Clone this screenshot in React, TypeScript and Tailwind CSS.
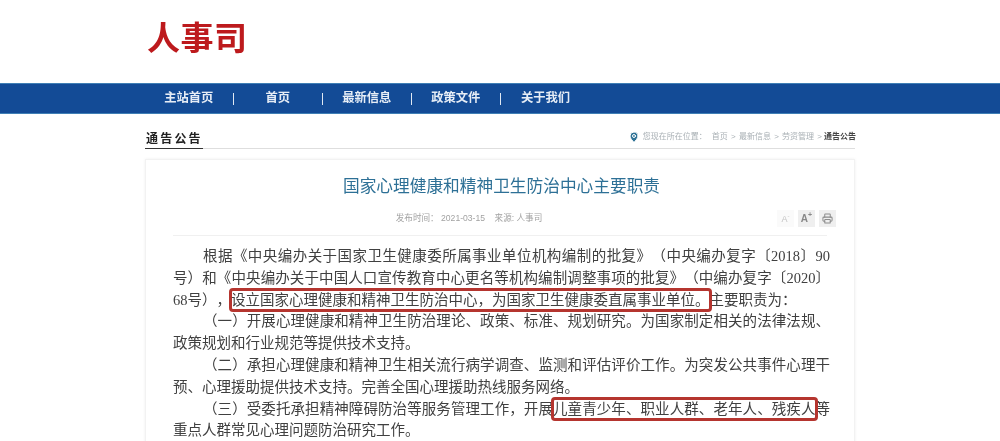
import { MapPin, Printer } from "lucide-react"

const sans = "font-['Liberation_Sans','Noto_Sans_CJK_SC',sans-serif]"
const navItems = ["主站首页", "首页", "最新信息", "政策文件", "关于我们"]

function Line({ indent, last, children }: { indent?: boolean; last?: boolean; children: React.ReactNode }) {
  return (
    <div className={`h-[21.8px] whitespace-nowrap ${indent ? "pl-[30px]" : ""} ${last ? "" : "[text-align-last:justify]"}`}>
      {children}
    </div>
  )
}

function Mark({ children }: { children: React.ReactNode }) {
  return <span className="rounded-[2px] py-[2px] outline-[3px] -outline-offset-1 outline-[#b5352f]">{children}</span>
}

export default function App() {
  return (
    <div className={`h-[441px] w-[1000px] overflow-hidden bg-white blur-[0.35px] ${sans}`}>
      <header className="h-[83px] pl-[147px] pt-[18px]">
        <h1 className="text-[33px] leading-[42px] font-bold tracking-[0.5px] text-[#bd1a1d]">人事司</h1>
      </header>

      <nav className="flex h-[31px] items-center border-y border-[#3f7fb5] bg-[#134b96] pl-[145px]">
        {navItems.map((item, i) => (
          <div key={item} className="flex w-[89px] items-center">
            <span className="flex-1 text-center text-[12.3px] font-bold text-[#e6edf6]">{item}</span>
            {i < navItems.length - 1 && <span className="h-[12px] w-[1.5px] bg-[#dfe8f3]" />}
          </div>
        ))}
      </nav>

      <div className="mx-[145px] mt-[14px] flex h-[21px] items-start justify-between border-b border-[#dedede]">
        <div className="h-[21px] border-b border-[#333] pl-px text-[12px] leading-[23px] font-bold tracking-[2.2px] text-[#222]">
          通告公告
        </div>
        <div className="-mr-px flex items-center pt-[2px] text-[8px] leading-[14px] text-[#a9b0b5]">
          <MapPin size={12} className="mr-[3px] fill-[#2f7396] text-white" strokeWidth={2} />
          <span className="mr-[5px]">您现在所在位置：</span>
          <span className="[word-spacing:1px]">首页 &gt; 最新信息 &gt; 劳资管理 &gt; </span>
          <span className="ml-[2px] font-bold text-[#444]">通告公告</span>
        </div>
      </div>

      <main className="mx-[145px] mt-[10px] h-[300px] border border-[#f2f2f2] px-[27px] shadow-[0_0_3px_#f0f0f0]">
        <h2 className="mt-[15px] pl-[3px] text-center text-[16.7px] leading-[24px] text-[#2d7096]">国家心理健康和精神卫生防治中心主要职责</h2>

        <div className="relative mt-[13px] flex h-[24px] justify-center border-b border-[#f0f0f0] pr-[62px] text-[8.6px] leading-[12px] text-[#a2a2a2]">
          <span>发布时间： 2021-03-15&nbsp;&nbsp;&nbsp;&nbsp;来源: 人事司</span>
          <div className="absolute top-[-2px] right-[-9px] flex gap-[4px]">
            <span className="flex h-[17px] w-[17px] items-center justify-center bg-[#fafafa] text-[9px] text-[#c4c4c4]">A<sup className="text-[6px]">-</sup></span>
            <span className="flex h-[17px] w-[17px] items-center justify-center bg-[#efefef] text-[10px] font-bold text-[#888]">A<sup className="text-[7px]">+</sup></span>
            <span className="flex h-[17px] w-[17px] items-center justify-center bg-[#efefef] text-[#8c8c8c]"><Printer size={11} strokeWidth={2.2} /></span>
          </div>
        </div>

        <article className="mt-[10px] -mr-[3px] font-['Liberation_Serif','Noto_Sans_CJK_SC',serif] text-[14.5px] leading-[21.8px] text-[#404040] [text-spacing-trim:space-all]">
          <Line indent>根据《中央编办关于国家卫生健康委所属事业单位机构编制的批复》（中央编办复字〔2018〕90</Line>
          <Line>号）和《中央编办关于中国人口宣传教育中心更名等机构编制调整事项的批复》（中编办复字〔2020〕</Line>
          <Line last>68号），<Mark>设立国家心理健康和精神卫生防治中心，为国家卫生健康委直属事业单位。</Mark>主要职责为：</Line>
          <Line indent>（一）开展心理健康和精神卫生防治理论、政策、标准、规划研究。为国家制定相关的法律法规、</Line>
          <Line last>政策规划和行业规范等提供技术支持。</Line>
          <Line indent>（二）承担心理健康和精神卫生相关流行病学调查、监测和评估评价工作。为突发公共事件心理干</Line>
          <Line last>预、心理援助提供技术支持。完善全国心理援助热线服务网络。</Line>
          <Line indent>（三）受委托承担精神障碍防治等服务管理工作，开展<Mark>儿童青少年、职业人群、老年人、残疾人</Mark>等</Line>
          <Line last>重点人群常见心理问题防治研究工作。</Line>
        </article>
      </main>
    </div>
  )
}
